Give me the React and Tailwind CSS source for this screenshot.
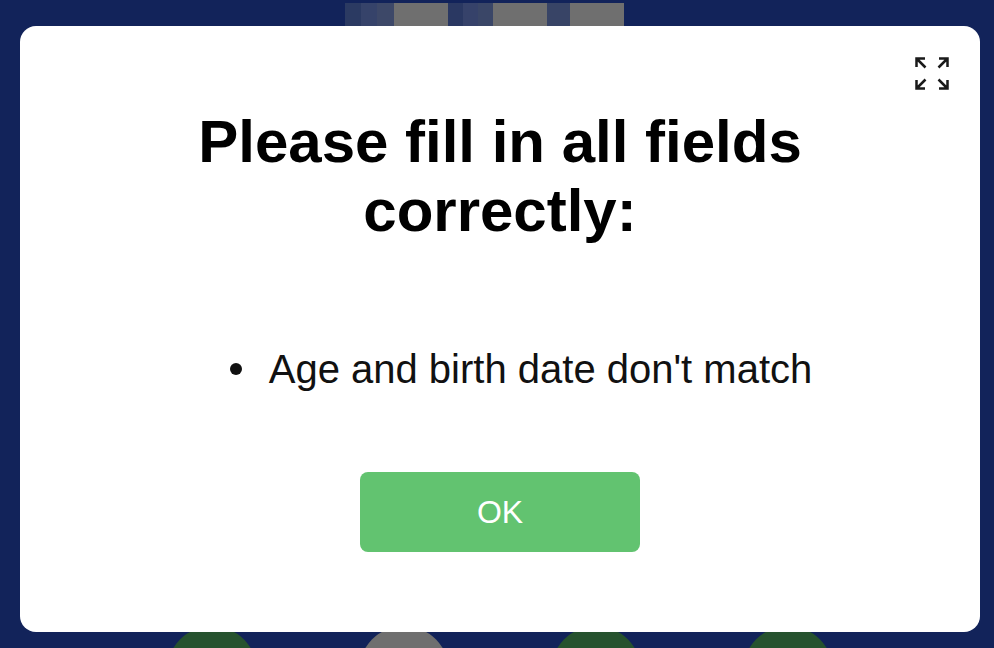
import React from "react";

const ExpandIcon = () => (
  <svg width="36" height="36" viewBox="0 0 36 36" fill="none" stroke="#1a1a1a" strokeWidth="2.5" strokeLinecap="butt" strokeLinejoin="miter">
    <path d="M2.5 11V2.5H11M3 3l8.5 8.5" />
    <path d="M25 2.5h8.5V11M33 3l-8.5 8.5" />
    <path d="M2.5 24v8.5H11M3 32l8.5-8.5" />
    <path d="M33.5 24v8.5H25M33 32l-8.5-8.5" />
  </svg>
);

const Tiles = () => (
  <div className="flex h-[23px] mt-[3px] ml-[345px]">
    <div className="w-[16px] bg-[#2b3a62]" />
    <div className="w-[16px] bg-[#36436a]" />
    <div className="w-[17px] bg-[#3d4868]" />
    <div className="w-[54px] bg-[#6f6f6f]" />
    <div className="w-[15px] bg-[#2a3862]" />
    <div className="w-[15px] bg-[#36426a]" />
    <div className="w-[15px] bg-[#3a4667]" />
    <div className="w-[54px] bg-[#6f6f6f]" />
    <div className="w-[23px] bg-[#384466]" />
    <div className="w-[54px] bg-[#6f6f6f]" />
  </div>
);

const Circles = () => (
  <div className="flex gap-[102px] ml-[167px] mt-auto h-[22px] overflow-hidden">
    <div className="w-[90px] h-[90px] shrink-0 rounded-full bg-[#26522e]" />
    <div className="w-[90px] h-[90px] shrink-0 rounded-full bg-[#6f6f6f]" />
    <div className="w-[90px] h-[90px] shrink-0 rounded-full bg-[#26522e]" />
    <div className="w-[90px] h-[90px] shrink-0 rounded-full bg-[#26522e]" />
  </div>
);

export default function App() {
  return (
    <div className="relative w-[994px] h-[648px] overflow-hidden bg-[#12235a] flex flex-col" style={{ fontFamily: '"Liberation Sans", Arial, sans-serif' }}>
      <Tiles />
      <Circles />

      {/* modal */}
      <div className="absolute left-[20px] top-[26px] w-[960px] h-[606px] bg-white rounded-[16px] flex flex-col items-center pt-[81px]">
        <div className="absolute right-[30px] top-[30px]">
          <ExpandIcon />
        </div>
        <h1 className="text-[60px] leading-[69px] font-bold text-black text-center w-[640px]">
          Please fill in all fields correctly:
        </h1>
        <div className="flex items-center justify-center w-full pl-[42px] mt-[101px]">
          <div className="w-[12px] h-[12px] rounded-full bg-[#111]" />
          <span className="ml-[27px] text-[40px] leading-[46px] text-[#111]">Age and birth date don't match</span>
        </div>
        <button className="mt-[80px] w-[280px] h-[80px] rounded-[8px] bg-[#62c370] text-white text-[32px]">
          OK
        </button>
      </div>
    </div>
  );
}
